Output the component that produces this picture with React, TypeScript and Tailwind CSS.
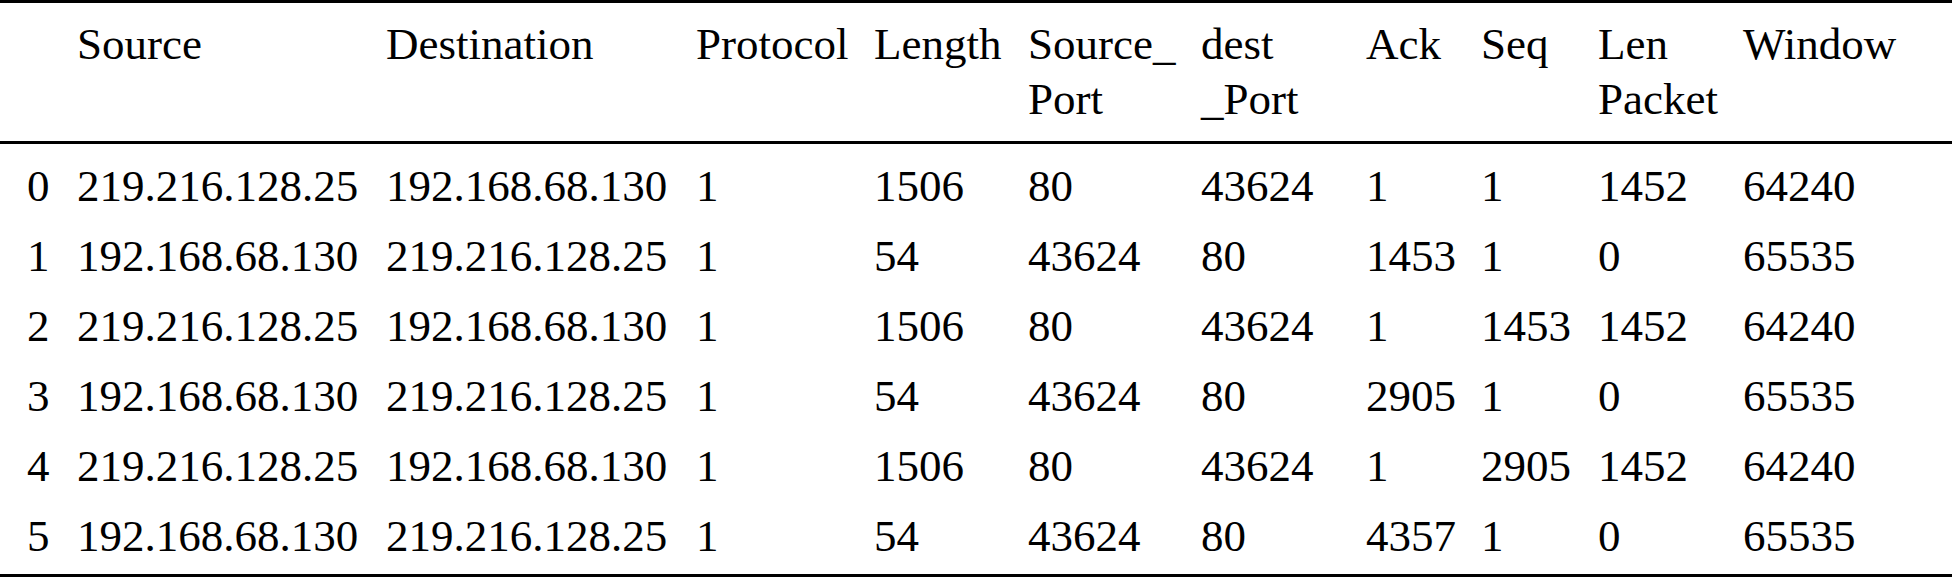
const headers: string[][] = [
  [""],
  ["Source"],
  ["Destination"],
  ["Protocol"],
  ["Length"],
  ["Source_", "Port"],
  ["dest", "_Port"],
  ["Ack"],
  ["Seq"],
  ["Len", "Packet"],
  ["Window"],
]

const rows: string[][] = [
  ["0", "219.216.128.25", "192.168.68.130", "1", "1506", "80", "43624", "1", "1", "1452", "64240"],
  ["1", "192.168.68.130", "219.216.128.25", "1", "54", "43624", "80", "1453", "1", "0", "65535"],
  ["2", "219.216.128.25", "192.168.68.130", "1", "1506", "80", "43624", "1", "1453", "1452", "64240"],
  ["3", "192.168.68.130", "219.216.128.25", "1", "54", "43624", "80", "2905", "1", "0", "65535"],
  ["4", "219.216.128.25", "192.168.68.130", "1", "1506", "80", "43624", "1", "2905", "1452", "64240"],
  ["5", "192.168.68.130", "219.216.128.25", "1", "54", "43624", "80", "4357", "1", "0", "65535"],
]

const cols = "grid grid-cols-[77px_309px_310px_178px_154px_173px_165px_115px_117px_145px_1fr]"

export default function App() {
  return (
    <div className="w-[1952px] h-[577px] bg-white text-black text-[45px] [font-family:Times_New_Roman,Tinos,Nimbus_Roman,FreeSerif,Liberation_Serif,serif] whitespace-nowrap">
      {/* header */}
      <div className={`${cols} border-t-[3px] border-b-[3px] border-black pt-[14px] pb-[14px] leading-[55px]`}>
        {headers.map((h, i) => (
          <div key={i} className={i === 0 ? "pl-[27px]" : ""}>
            {h.map((line, j) => (
              <div key={j} className="h-[55px]">{line}</div>
            ))}
          </div>
        ))}
      </div>

      {/* body */}
      <div className="border-b-[3px] border-black pt-[7px] pb-[3px] leading-[70px]">
        {rows.map((r, i) => (
          <div key={i} className={`${cols} h-[70px]`}>
            {r.map((cell, j) => (
              <div key={j} className={j === 0 ? "pl-[27px]" : ""}>{cell}</div>
            ))}
          </div>
        ))}
      </div>
    </div>
  )
}
